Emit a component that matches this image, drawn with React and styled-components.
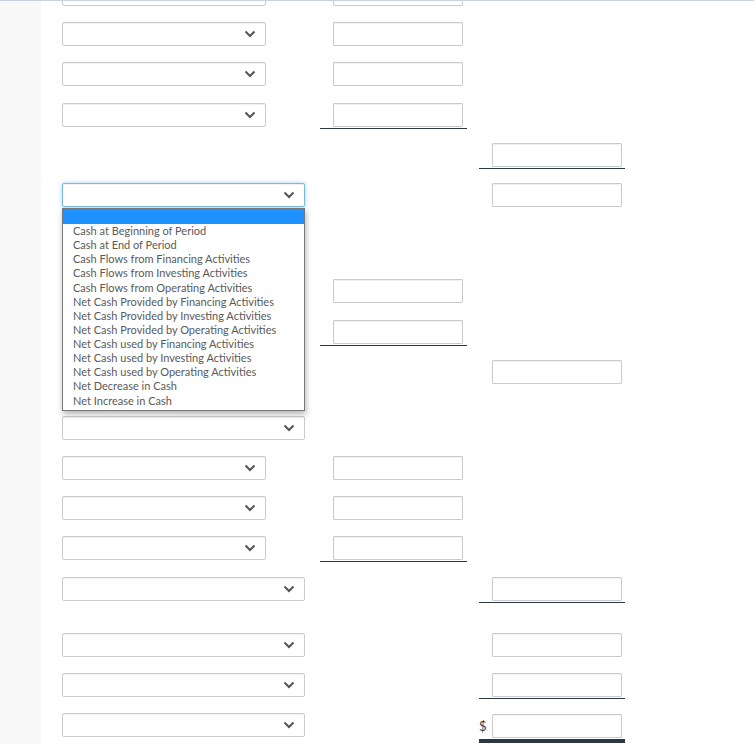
import styled, { createGlobalStyle } from 'styled-components'

const GlobalStyle = createGlobalStyle`
    html, body {
        margin: 0;
        padding: 0;
        background: #fff;
        font-family: Lato, "Open Sans", sans-serif;
    }
`

const Page = styled.div`
    box-sizing: border-box;
    height: 744px;
    border-top: 1px solid #c9d3e3;
    display: flex;
    overflow: hidden;
`

const Gutter = styled.div`
    width: 41px;
    flex-shrink: 0;
    background: #f9f9f9;
`

const Viewport = styled.div`
    flex: 1;
    overflow: hidden;
    padding-left: 21px;
`

const Sheet = styled.div`
    margin-top: -19px;
    display: flex;
    flex-direction: column;
`

const Row = styled.div`
    display: grid;
    grid-template-columns: 258px 159px 146px;
    align-items: start;
    flex-shrink: 0;
    height: 40.2px;
    margin-top: ${props => (props.$gap ? '16px' : '0')};
`

const Cell = styled.div`
    box-sizing: border-box;
    width: ${props => props.$width}px;
    display: flex;
    align-items: center;
    justify-content: flex-end;
    padding: 0 ${props => props.$pad}px 1px 0;
    border-bottom: ${props =>
        props.$line === 'double'
            ? '4px solid #2b3842'
            : props.$line
            ? '1px solid #2d3843'
            : '1px solid transparent'};
`

const Dollar = styled.span`
    flex: 1;
    font-size: 13px;
    color: #2e3a5c;
    line-height: 24px;
    padding-top: 1px;
`

const Input = styled.div`
    box-sizing: border-box;
    width: 130px;
    height: 24px;
    background: #fff;
    border: 1px solid #cbcbcb;
    border-radius: 1px;
    box-shadow: inset 0 1px 1px rgba(0, 0, 0, 0.06);
`

const SelectWrap = styled.div`
    position: relative;
    width: ${props => (props.$wide ? 243 : 204)}px;
`

const SelectBox = styled.div`
    box-sizing: border-box;
    height: 24px;
    display: flex;
    align-items: center;
    justify-content: flex-end;
    padding-right: 9px;
    background: #fff;
    border: 1px solid ${props => (props.$focus ? '#7ab8ea' : '#cbcbcb')};
    border-radius: 2px;
    box-shadow: ${props =>
        props.$focus
            ? '0 0 4px rgba(102, 175, 233, 0.6), inset 0 1px 1px rgba(0, 0, 0, 0.06)'
            : 'inset 0 1px 1px rgba(0, 0, 0, 0.06)'};
    color: #555;
`

const Menu = styled.ul`
    position: absolute;
    z-index: 5;
    top: 25px;
    left: 0;
    box-sizing: border-box;
    width: 243px;
    margin: 0;
    padding: 0 0 2px 0;
    list-style: none;
    background: #fff;
    border: 1px solid #777;
    box-shadow: 1px 3px 6px rgba(0, 0, 0, 0.3);
`

const Option = styled.li`
    height: ${props => (props.$blank ? 15 : 14.15)}px;
    line-height: 14px;
    padding-left: 10px;
    font-size: 11px;
    color: #5a5a5a;
    white-space: nowrap;
    background: ${props => (props.$active ? '#1e90ff' : 'transparent')};
`

const options = [
    'Cash at Beginning of Period',
    'Cash at End of Period',
    'Cash Flows from Financing Activities',
    'Cash Flows from Investing Activities',
    'Cash Flows from Operating Activities',
    'Net Cash Provided by Financing Activities',
    'Net Cash Provided by Investing Activities',
    'Net Cash Provided by Operating Activities',
    'Net Cash used by Financing Activities',
    'Net Cash used by Investing Activities',
    'Net Cash used by Operating Activities',
    'Net Decrease in Cash',
    'Net Increase in Cash',
]

const rows = [
    { sel: 'narrow', mid: true },
    { sel: 'narrow', mid: true },
    { sel: 'narrow', mid: true },
    { sel: 'narrow', mid: true, midLine: true },
    { right: true, rightLine: true },
    { sel: 'wide', right: true, open: true },
    { sel: 'wide', gap: true },
    { sel: 'narrow', mid: true },
    { sel: 'narrow', mid: true, midLine: true },
    { sel: 'wide', right: true },
    { sel: 'wide', gap: true },
    { sel: 'narrow', mid: true },
    { sel: 'narrow', mid: true },
    { sel: 'narrow', mid: true, midLine: true },
    { sel: 'wide', right: true, rightLine: true },
    { sel: 'wide', right: true, gap: true },
    { sel: 'wide', right: true, rightLine: true },
    { sel: 'wide', right: true, dollar: true, rightLine: 'double' },
]

function Chevron() {
    return (
        <svg width="12" height="8" viewBox="0 0 12 8" fill="none">
            <path d="M1.5 1.5 L6 6 L10.5 1.5" stroke="#555" strokeWidth="2" />
        </svg>
    )
}

function Select({ wide, open }) {
    return (
        <SelectWrap $wide={wide}>
            <SelectBox $focus={open}>
                <Chevron />
            </SelectBox>
            {open && (
                <Menu>
                    <Option $blank $active />
                    {options.map(o => (
                        <Option key={o}>{o}</Option>
                    ))}
                </Menu>
            )}
        </SelectWrap>
    )
}

export default function App() {
    return (
        <>
            <GlobalStyle />
            <Page>
                <Gutter />
                <Viewport>
                    <Sheet>
                        {rows.map((r, i) => (
                            <Row key={i} $gap={r.gap}>
                                <div>{r.sel && <Select wide={r.sel === 'wide'} open={r.open} />}</div>
                                <div>
                                    {r.mid && (
                                        <Cell $width={147} $pad={4} $line={r.midLine}>
                                            <Input />
                                        </Cell>
                                    )}
                                </div>
                                <div>
                                    {r.right && (
                                        <Cell $width={146} $pad={3} $line={r.rightLine}>
                                            {r.dollar && <Dollar>$</Dollar>}
                                            <Input />
                                        </Cell>
                                    )}
                                </div>
                            </Row>
                        ))}
                    </Sheet>
                </Viewport>
            </Page>
        </>
    )
}
